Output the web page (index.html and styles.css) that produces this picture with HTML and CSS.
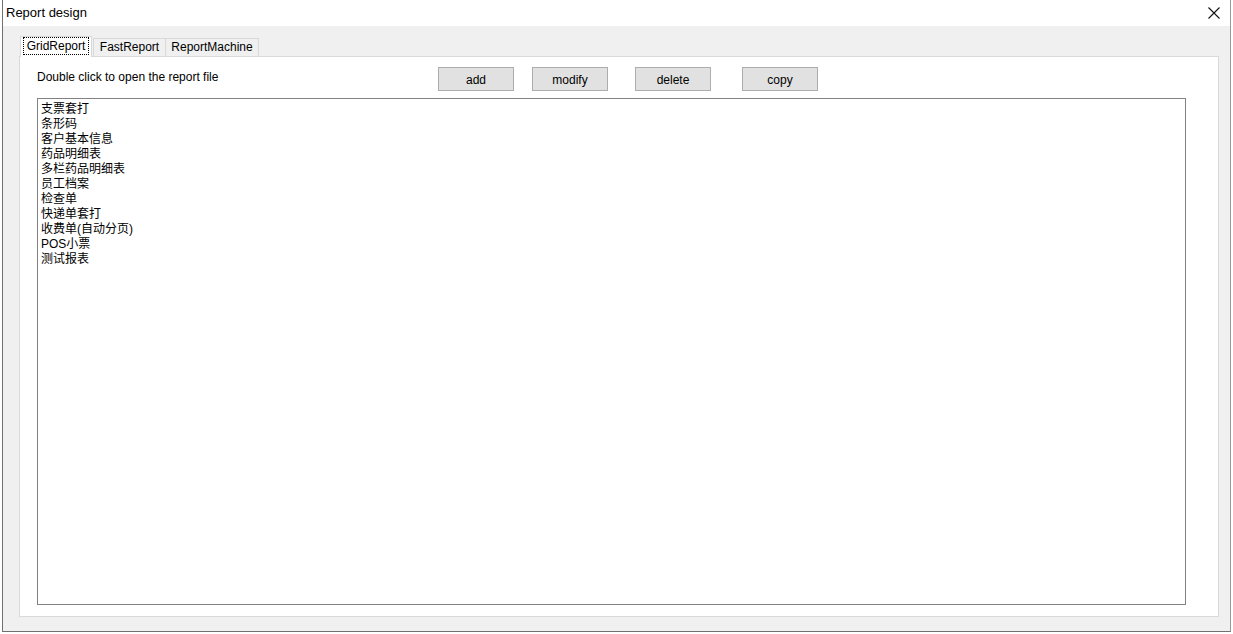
FILE: index.html
```html
<!DOCTYPE html>
<html>
<head>
<meta charset="utf-8">
<link rel="stylesheet" href="styles.css">
</head>
<body>
<div class="window">
  <div class="titlebar">
    <span class="title">Report design</span>
    <svg class="close" width="12" height="12" viewBox="0 0 12 12"><path d="M0.5 0.5 L11.5 11.5 M11.5 0.5 L0.5 11.5" stroke="#111" stroke-width="1.1" fill="none"/></svg>
  </div>
  <div class="client">
    <div class="tabs">
      <div class="tab active"><span class="focus">GridReport</span></div>
      <div class="tab t-fast">FastReport</div>
      <div class="tab t-rm">ReportMachine</div>
    </div>
    <div class="panel">
      <div class="toolbar">
        <div class="label">Double click to open the report file</div>
        <button class="btn b-add">add</button>
        <button class="btn b-modify">modify</button>
        <button class="btn b-delete">delete</button>
        <button class="btn b-copy">copy</button>
      </div>
      <div class="listbox">
        <div class="item">支票套打</div>
        <div class="item">条形码</div>
        <div class="item">客户基本信息</div>
        <div class="item">药品明细表</div>
        <div class="item">多栏药品明细表</div>
        <div class="item">员工档案</div>
        <div class="item">检查单</div>
        <div class="item">快递单套打</div>
        <div class="item">收费单(自动分页)</div>
        <div class="item">POS小票</div>
        <div class="item">测试报表</div>
      </div>
    </div>
  </div>
</div>
</body>
</html>
```

FILE: styles.css
```css
html, body {
  margin: 0;
  padding: 0;
  background: #ffffff;
  font-family: "Liberation Sans", "Noto Sans CJK SC", sans-serif;
  font-size: 12px;
  color: #000;
}
.window {
  margin-left: 2px;
  width: 1227px;
  height: 631px;
  border-left: 1px solid #707070;
  border-right: 1px solid #9a9a9a;
  border-bottom: 1px solid #707070;
  display: flex;
  flex-direction: column;
  background: #f0f0f0;
}
.titlebar {
  height: 26px;
  background: #ffffff;
  display: flex;
  align-items: center;
  justify-content: space-between;
  padding: 0 10px 0 3px;
  flex: none;
}
.title {
  font-size: 13px;
  color: #000;
  margin-top: -1px;
}
.client {
  flex: 1;
  padding: 10px 0 0 16px;
}
.tabs {
  display: flex;
  align-items: flex-end;
  height: 20px;
  padding-left: 1px;
  position: relative;
  z-index: 1;
}
.tab {
  height: 17px;
  line-height: 17px;
  border: 1px solid #d9d9d9;
  border-bottom: none;
  background: #f0f0f0;
  margin-left: -1px;
  white-space: nowrap;
  text-align: center;
  box-sizing: content-box;
}
.t-fast { width: 71px; }
.t-rm { width: 92px; }
.tab.active {
  width: 70px;
  height: 20px;
  line-height: 18px;
  background: #ffffff;
  margin-left: 0;
  margin-right: 2px;
  position: relative;
  top: 1px;
}
.focus {
  display: inline-block;
  outline: 1px dotted #000;
  padding: 0 3px;
  line-height: 16px;
  margin-top: 0;
}
.panel {
  width: 1181px;
  background: #ffffff;
  border: 1px solid #d9d9d9;
  padding: 10px 0 0 17px;
  box-sizing: content-box;
  height: 549px;
}
.toolbar {
  display: flex;
  align-items: flex-start;
  height: 31px;
}
.label {
  width: 401px;
  padding-top: 3px;
  line-height: 14px;
  flex: none;
}
.btn {
  width: 76px;
  height: 24px;
  background: #e1e1e1;
  border: 1px solid #adadad;
  font-family: "Liberation Sans", sans-serif;
  font-size: 12px;
  padding: 2px 0 0 0;
  margin: 0;
  color: #000;
  flex: none;
}
.b-modify { margin-left: 18px; }
.b-delete { margin-left: 27px; }
.b-copy { margin-left: 31px; }
.listbox {
  border: 1px solid #828282;
  background: #ffffff;
  padding: 3px 0 0 3px;
  box-sizing: content-box;
  height: 502px;
  width: 1144px;
}
.item {
  height: 15px;
  line-height: 15px;
  font-size: 12px;
  white-space: nowrap;
}
```
